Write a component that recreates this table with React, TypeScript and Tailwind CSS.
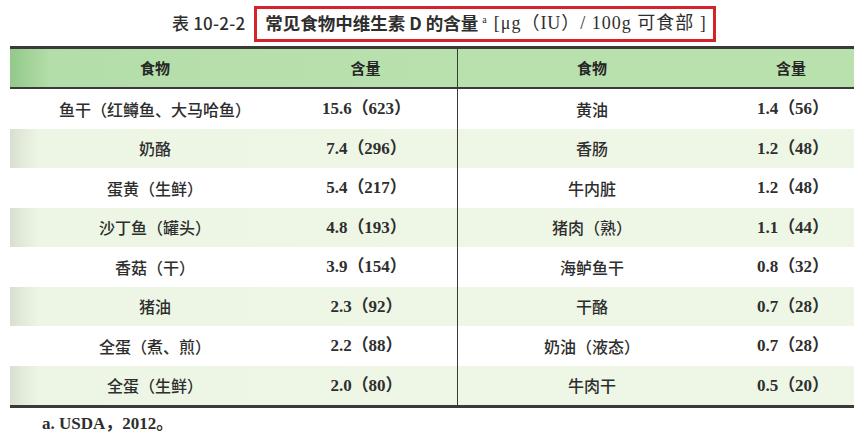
const rows: [string, string, string, string][] = [
  ["鱼干（红鳟鱼、大马哈鱼）", "15.6（623）", "黄油", "1.4（56）"],
  ["奶酪", "7.4（296）", "香肠", "1.2（48）"],
  ["蛋黄（生鲜）", "5.4（217）", "牛内脏", "1.2（48）"],
  ["沙丁鱼（罐头）", "4.8（193）", "猪肉（熟）", "1.1（44）"],
  ["香菇（干）", "3.9（154）", "海鲈鱼干", "0.8（32）"],
  ["猪油", "2.3（92）", "干酪", "0.7（28）"],
  ["全蛋（煮、煎）", "2.2（88）", "奶油（液态）", "0.7（28）"],
  ["全蛋（生鲜）", "2.0（80）", "牛肉干", "0.5（20）"],
];

const serif = "font-['Liberation_Serif','Noto_Sans_CJK_SC',serif]";

const Cell = ({ text, className = "" }: { text: string; className?: string }) => (
  <div className={`flex items-center justify-center ${className}`}>{text}</div>
);

export default function App() {
  return (
    <div className="w-[864px] h-[437px] bg-white overflow-hidden text-[#2e2e2e] font-['Noto_Sans_CJK_SC',sans-serif]">
      {/* caption */}
      <div className="flex items-center h-[46px] pl-[172px]">
        <span className="text-[17px] font-medium tracking-[0.2px] mr-[9px]">表 10-2-2</span>
        <div className="flex items-center h-[36px] w-[462px] border-[3px] border-[#d4232b] pl-[8px] pr-[6px] mt-[1px]">
          <span className="text-[17.5px] font-bold">常见食物中维生素 D 的含量</span>
          <span className={`text-[10px] self-start mt-[3px] ml-[4px] mr-[7px] ${serif}`}>a</span>
          <span className={`text-[18px] tracking-[1px] ${serif}`}>[μg（IU）/ 100g 可食部 ]</span>
        </div>
      </div>

      {/* table */}
      <div className="mx-[10px] border-t-[3px] border-b-[3px] border-[#3a3a3a] grid grid-cols-[448px_1fr]">
        {/* left half */}
        <div className="border-r-[1.5px] border-[#3a3a3a]">
          <div className="grid grid-cols-[290px_1fr] h-[40px] border-b-2 border-[#3a3a3a] bg-[linear-gradient(90deg,#93c98a_0px,#b3dda9_40px,#b9e1ae_100%)] text-[15px] font-bold text-[#262626]">
            <Cell text="食物" />
            <Cell text="含量" className="pr-[26px]" />
          </div>
          {rows.map((r, i) => (
            <div
              key={i}
              className={`grid grid-cols-[290px_1fr] h-[39.5px] text-[16px] font-medium ${
                i % 2 === 1 ? "bg-[linear-gradient(90deg,#d9dfd3_0px,#e3ecdb_14px,#edf6e5_30px,#eef7e6_100%)]" : ""
              }`}
            >
              <Cell text={r[0]} />
              <Cell text={r[1]} className={`pr-[24px] text-[17px] font-bold ${serif}`} />
            </div>
          ))}
        </div>

        {/* right half */}
        <div>
          <div className="grid grid-cols-[268px_1fr] h-[40px] border-b-2 border-[#3a3a3a] bg-[#b9e1ae] text-[15px] font-bold text-[#262626]">
            <Cell text="食物" />
            <Cell text="含量" className="pl-[2px]" />
          </div>
          {rows.map((r, i) => (
            <div
              key={i}
              className={`grid grid-cols-[268px_1fr] h-[39.5px] text-[16px] font-medium ${
                i % 2 === 1 ? "bg-[#eef7e6]" : ""
              }`}
            >
              <Cell text={r[2]} />
              <Cell text={r[3]} className={`pl-[6px] text-[17px] font-bold ${serif}`} />
            </div>
          ))}
        </div>
      </div>

      {/* footnote */}
      <div className={`pl-[42px] pt-[3px] text-[17px] font-bold ${serif}`}>a. USDA，2012。</div>
    </div>
  );
}
